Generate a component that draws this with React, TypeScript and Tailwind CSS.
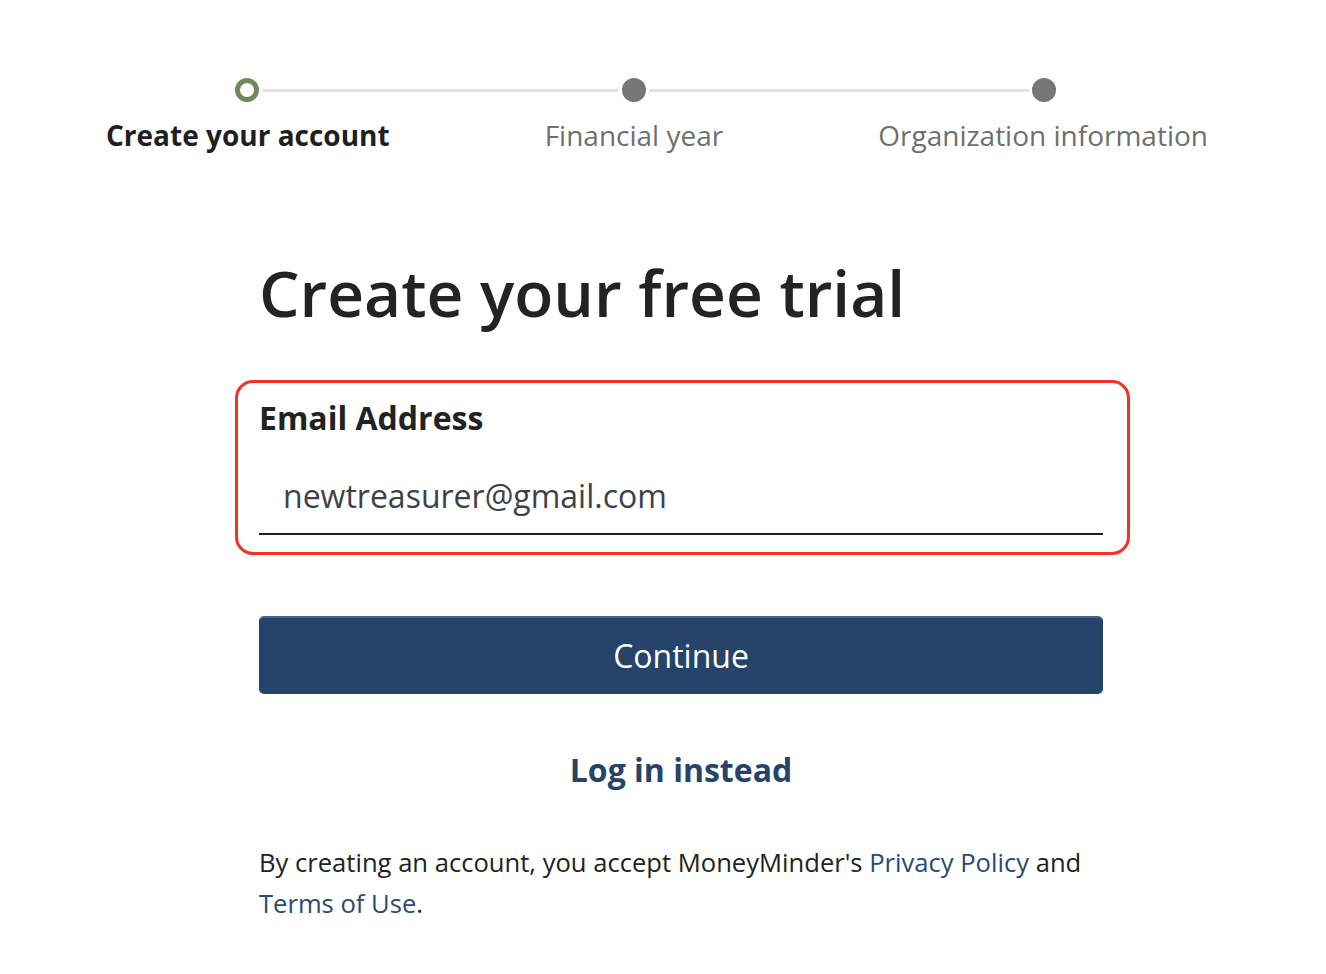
import React from 'react';

const STEPS = [
  { label: 'Create your account', active: true },
  { label: 'Financial year', active: false },
  { label: 'Organization information', active: false },
];

function Dot({ active }: { active: boolean }) {
  return active ? (
    <span className="block w-6 h-6 shrink-0 rounded-full border-[5px] border-[#6c8a5b] bg-white" />
  ) : (
    <span className="block w-6 h-6 shrink-0 rounded-full bg-[#777777]" />
  );
}

export default function App() {
  return (
    <div className="min-h-screen bg-white text-[#222222] font-['Open_Sans','Liberation_Sans',sans-serif]">
      {/* Stepper */}
      <div className="pt-[78px]">
        <div className="flex items-center pl-[235px]">
          <Dot active={STEPS[0].active} />
          <span className="block h-[3px] w-[355px] mx-1 bg-[#e2e2e2]" />
          <Dot active={STEPS[1].active} />
          <span className="block h-[3px] w-[380px] mx-[3px] bg-[#e2e2e2]" />
          <Dot active={STEPS[2].active} />
        </div>
        <div className="mt-[15px] ml-[106px] w-[1102px] flex justify-between text-[28px] leading-[36px]">
          {STEPS.map((s) => (
            <span key={s.label} className={s.active ? 'font-bold text-[#1f1f1f]' : 'text-[#6f6f6f]'}>
              {s.label}
            </span>
          ))}
        </div>
      </div>

      {/* Heading */}
      <h1 className="mt-[100px] ml-[259px] text-[64px] leading-[80px] font-semibold text-[#232323]">
        Create your free trial
      </h1>

      {/* Email field */}
      <div className="mt-[47px] ml-[235px] w-[895px] border-[3px] border-[#f5321f] rounded-[18px] pt-[15px] pb-[17px] pl-[21px] pr-[24px]">
        <label className="block text-[32px] leading-[40px] font-bold text-[#222222]">Email Address</label>
        <input
          type="email"
          defaultValue="newtreasurer@gmail.com"
          className="mt-[20px] block w-full h-[77px] pl-[24px] border-b-2 border-[#1f1f1f] bg-transparent text-[32px] text-[#3d4249] outline-none"
        />
      </div>

      {/* Continue */}
      <button className="mt-[61px] ml-[259px] w-[844px] h-[78px] rounded-[5px] bg-[#26446a] border-t-2 border-[#4b6485] text-white text-[32px]">
        Continue
      </button>

      <div className="mt-[54px] ml-[259px] w-[844px] text-center">
        <a href="#" className="text-[32px] leading-[44px] font-bold text-[#26446a]">
          Log in instead
        </a>
      </div>

      <p className="mt-[50px] ml-[259px] w-[844px] text-[25.6px] leading-[41px] text-[#222222]">
        By creating an account, you accept MoneyMinder's{' '}
        <a href="#" className="text-[#2a4a73]">Privacy Policy</a> and{' '}
        <a href="#" className="text-[#2a4a73]">Terms of Use</a>.
      </p>
    </div>
  );
}
